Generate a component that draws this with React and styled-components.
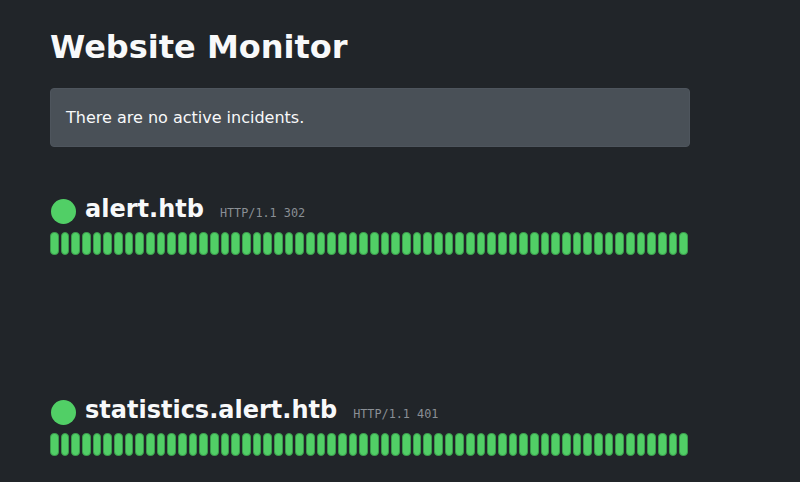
import React from "react";
import styled, { createGlobalStyle } from "styled-components";

const GlobalStyle = createGlobalStyle`
  html, body {
    margin: 0;
    padding: 0;
    background: #212529;
  }
  body {
    font-family: "DejaVu Sans", "Liberation Sans", sans-serif;
    color: #f8f9fa;
  }
`;

const Page = styled.main`
  width: 640px;
  padding: 28px 50px 0;
`;

const Title = styled.h1`
  margin: 0 0 22px;
  font-size: 32px;
  line-height: 38px;
  font-weight: 700;
  color: #f8f9fa;
`;

const Alert = styled.div`
  background: #495057;
  border: 1px solid #4e555d;
  border-radius: 4px;
  padding: 16px 15px;
  font-size: 16px;
  line-height: 25px;
  color: #f8f9fa;
`;

const SiteList = styled.div`
  display: flex;
  flex-direction: column;
  gap: 140px;
  margin-top: 47px;
`;

const Site = styled.section`
  display: flex;
  flex-direction: column;
  gap: 8px;
`;

const SiteHeader = styled.div`
  display: flex;
  align-items: baseline;
  height: 30px;
`;

const Dot = styled.span`
  align-self: flex-end;
  width: 25px;
  height: 25px;
  margin-left: 1px;
  margin-right: 9px;
  border-radius: 50%;
  background: ${(p) => (p.$up ? "#51cf66" : "#ff6b6b")};
  flex: none;
`;

const SiteName = styled.h2`
  margin: 0;
  font-size: 24px;
  line-height: 30px;
  font-weight: 700;
  color: #f8f9fa;
`;

const Status = styled.span`
  margin-left: 16px;
  font-family: "DejaVu Sans Mono", "Liberation Mono", monospace;
  font-size: 11.8px;
  color: #8a8f95;
`;

const Bars = styled.div`
  display: grid;
  grid-template-columns: repeat(${(p) => p.$count}, 1fr);
  column-gap: 2px;
  width: 638px;
  height: 23px;
`;

const Bar = styled.span`
  box-sizing: border-box;
  height: 100%;
  border-radius: 4px;
  border: 1px solid #3b9a4c;
  background: ${(p) => (p.$up ? "#51cf66" : "#ff6b6b")};
`;

const sites = [
  { name: "alert.htb", status: "HTTP/1.1 302" },
  { name: "statistics.alert.htb", status: "HTTP/1.1 401" },
];

const BAR_COUNT = 60;

export default function App() {
  return (
    <>
      <GlobalStyle />
      <Page>
        <Title>Website Monitor</Title>
        <Alert>There are no active incidents.</Alert>
        <SiteList>
          {sites.map((s) => (
            <Site key={s.name}>
              <SiteHeader>
                <Dot $up />
                <SiteName>{s.name}</SiteName>
                <Status>{s.status}</Status>
              </SiteHeader>
              <Bars $count={BAR_COUNT}>
                {Array.from({ length: BAR_COUNT }, (_, i) => (
                  <Bar key={i} $up />
                ))}
              </Bars>
            </Site>
          ))}
        </SiteList>
      </Page>
    </>
  );
}
